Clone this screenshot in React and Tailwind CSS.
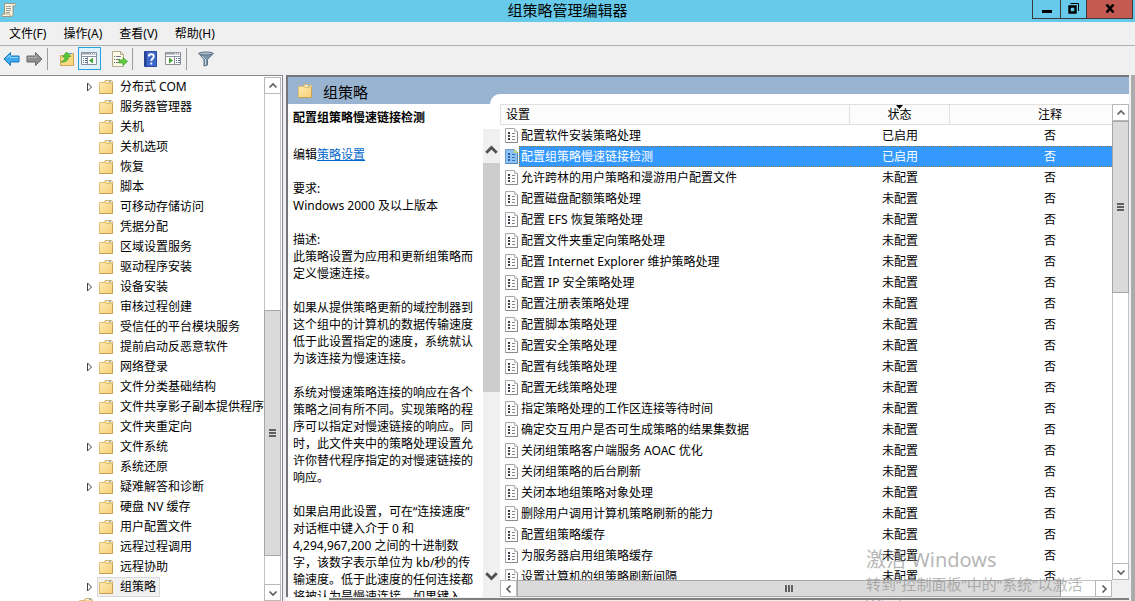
import React from "react";

const tree = [
  ["分布式 COM", true], ["服务器管理器"], ["关机"], ["关机选项"], ["恢复"], ["脚本"], ["可移动存储访问"],
  ["凭据分配"], ["区域设置服务"], ["驱动程序安装"], ["设备安装", true], ["审核过程创建"],
  ["受信任的平台模块服务"], ["提前启动反恶意软件"], ["网络登录", true], ["文件分类基础结构"],
  ["文件共享影子副本提供程序"], ["文件夹重定向"], ["文件系统", true], ["系统还原"],
  ["疑难解答和诊断", true], ["硬盘 NV 缓存"], ["用户配置文件"], ["远程过程调用"], ["远程协助"],
  ["组策略", true, true],
];

const policies = [
  "配置软件安装策略处理", "配置组策略慢速链接检测", "允许跨林的用户策略和漫游用户配置文件",
  "配置磁盘配额策略处理", "配置 EFS 恢复策略处理", "配置文件夹重定向策略处理",
  "配置 Internet Explorer 维护策略处理", "配置 IP 安全策略处理", "配置注册表策略处理",
  "配置脚本策略处理", "配置安全策略处理", "配置有线策略处理", "配置无线策略处理",
  "指定策略处理的工作区连接等待时间", "确定交互用户是否可生成策略的结果集数据",
  "关闭组策略客户端服务 AOAC 优化", "关闭组策略的后台刷新", "关闭本地组策略对象处理",
  "删除用户调用计算机策略刷新的能力", "配置组策略缓存", "为服务器启用组策略缓存",
  "设置计算机的组策略刷新间隔",
];

const description = [
  "描述:", "此策略设置为应用和更新组策略而", "定义慢速连接。", "",
  "如果从提供策略更新的域控制器到", "这个组中的计算机的数据传输速度", "低于此设置指定的速度，系统就认", "为该连接为慢速连接。", "",
  "系统对慢速策略连接的响应在各个", "策略之间有所不同。实现策略的程", "序可以指定对慢速链接的响应。同", "时，此文件夹中的策略处理设置允", "许你替代程序指定的对慢速链接的", "响应。", "",
  "如果启用此设置，可在“连接速度”", "对话框中键入介于 0 和", "4,294,967,200 之间的十进制数", "字，该数字表示单位为 kb/秒的传", "输速度。低于此速度的任何连接都", "将被认为是慢速连接。如果键入",
];

function Folder() {
  return (
    <svg width="16" height="16" viewBox="0 0 16 16" className="shrink-0" aria-hidden="true">
      <defs>
        <linearGradient id="folder" x1="0" y1="0" x2="1" y2="1">
          <stop offset="0" stopColor="#ffebb0" />
          <stop offset="1" stopColor="#f5cf78" />
        </linearGradient>
      </defs>
      <path d="M6.500 5V2.500l1-1h6l1 1V6z" fill="#f3da98" stroke="#d2b068" />
      <path d="M8.500 2.500h5" stroke="#fdfdf5" />
      <path d="M11 2.500h2" stroke="#5aa5e0" />
      <path d="M1.500 3.500h5.500l1.500 1h6v10h-13z" fill="url(#folder)" stroke="#e2be70" />
      <path d="M1.500 14.500h13V5" fill="none" stroke="#c9a152" />
    </svg>
  );
}

function PolicyIcon({ selected }) {
  return (
    <svg width="14" height="16" viewBox="0 0 14 16" className="shrink-0" aria-hidden="true">
      <path d="M.5.5h9l3 3v11H.5z" fill={selected ? "#8cc2fa" : "#fdfdfd"} stroke={selected ? "#6a9ccc" : "#a8a8a8"} />
      <path d="M.5 14.500h12V4" fill="none" stroke={selected ? "#5485b8" : "#8a8a8a"} />
      <path d="M9.500.5v3h3" fill={selected ? "#c9e4a0" : "#ececec"} stroke={selected ? "#b9d65a" : "#b8b8b8"} />
      <path d="M3 4h2v2H3zM3 7h2v2H3zM3 10h2v2H3z" fill={selected ? "#2b5c9e" : "#3c3c46"} />
      <path d="M7 5.500h3M7 8.500h3M7 11.500h3" stroke={selected ? "#3e70ad" : "#85858f"} />
    </svg>
  );
}

function Chevron({ dir, bold }) {
  const paths = { up: "M1.500 6.500L5 3l3.500 3.500", down: "M1.500 3.500L5 7l3.500-3.500", left: "M6.500 1.500L3 5l3.500 3.500", right: "M3.500 1.500L7 5 3.500 8.500" };
  return (
    <svg width={bold ? 15 : 10} height={bold ? 15 : 10} viewBox="0 0 10 10" aria-hidden="true">
      <path d={paths[dir]} fill="none" stroke={bold ? "#505050" : "#606060"} strokeWidth={bold ? 1.900 : 1.700} />
    </svg>
  );
}

function Grip({ vertical }) {
  return (
    <svg width="9" height="9" viewBox="0 0 9 9" aria-hidden="true">
      <path d={vertical ? "M1 1v7M4 1v7M7 1v7" : "M1 1h7M1 4h7M1 7h7"} stroke="#606060" strokeWidth="2" />
    </svg>
  );
}

const arrowButton = "flex h-[17px] w-[17px] shrink-0 items-center justify-center border border-[#b8b8b8] bg-white";

function Arrow({ dir, label }) {
  return <button type="button" aria-label={label} className={arrowButton}><Chevron dir={dir} /></button>;
}

function ToolButton({ label, active, children }) {
  return (
    <button type="button" aria-label={label} className={`flex h-[23px] w-[23px] shrink-0 items-center justify-center border ${active ? "border-[#26a0da] bg-[#dff1fb]" : "border-transparent"}`}>
      {children}
    </button>
  );
}

function Separator({ className }) {
  return <div className={`h-[22px] w-px shrink-0 bg-[#9c9c9c] ${className}`} />;
}

function ArrowIcon({ forward }) {
  return (
    <svg width="17" height="16" viewBox="0 0 17 16" aria-hidden="true">
      <path
        d={forward ? "M16 8L9.500 1.500v3.500H1v6h8.500v3.500z" : "M1 8l6.500-6.500v3.500H16v6H7.500v3.500z"}
        fill={forward ? "#8e8e8e" : "#3daaf0"} stroke={forward ? "#6a6a6a" : "#1c78bd"}
      />
      <path d={forward ? "M2 6.500h8V4" : "M4 7l3-3v2.500h8"} fill="none" stroke={forward ? "#b4b4b4" : "#8ad4ff"} />
    </svg>
  );
}

function PanelIcon({ flipped }) {
  return (
    <svg width="17" height="15" viewBox="0 0 17 15" aria-hidden="true">
      <path d="M.5 1.500h15v12H.5z" fill="#fff" stroke="#8a8f96" />
      <path d="M1 2.500h14" stroke="#98a1ac" strokeWidth="2" />
      <path d="M10 2.500h1M12 2.500h1M14 2.500h1" stroke="#fff" />
      <path d="M1 5.500h14" stroke="#8b949e" />
      {flipped ? (
        <>
          <path d="M9.500 6v7" stroke="#8a8f96" />
          <path d="M11 7.500h1M11 9.500h1M11 11.500h1M13 7.500h2M13 9.500h2M13 11.500h2" stroke="#4e6f9b" />
          <path d="M4 6.500l4 3-4 3z" fill="#3fa535" />
        </>
      ) : (
        <>
          <path d="M6.500 6v7" stroke="#8a8f96" />
          <path d="M2 7.500h1M2 9.500h1M2 11.500h1M4 7.500h2M4 9.500h2M4 11.500h2" stroke="#4e6f9b" />
          <path d="M12 6.500l-4 3 4 3z" fill="#3fa535" />
        </>
      )}
    </svg>
  );
}

export default function App() {
  return (
    <div className="relative flex h-screen flex-col overflow-hidden bg-[#f0f0f0] font-['Noto_Sans','Noto_Sans_CJK_SC',sans-serif] text-xs text-black">
      <header className="flex h-[22px] shrink-0 items-start bg-[#67caea]">
        <div className="w-[103px] pt-[2px] pl-[1px]">
          <svg width="16" height="16" viewBox="0 0 16 16" aria-hidden="true">
            <path d="M3.500 1.500h10c1.500 0 1.500 2.500 0 2.500H12v8c0 2-1 2.500-2 2.500H2c-1.500 0-1.500-2.500 0-2.500h1.500z" fill="#fbf6e3" stroke="#a0977c" />
            <path d="M12 4V2.500M2 12h7v2" fill="none" stroke="#b8ad8a" />
            <path d="M5 4.500h5M5 6.500h5M5 8.500h5M5 10.500h4" stroke="#9a9a96" />
          </svg>
        </div>
        <h1 className="flex-1 text-center text-[15px] leading-[20px]">组策略管理编辑器</h1>
        <div className="mr-[2px] flex h-[19px] w-[101px] divide-x divide-[#3a3a3a] border border-t-0 border-[#3a3a3a]">
          <button type="button" aria-label="最小化" className="flex w-[28px] items-center justify-center">
            <svg width="10" height="10" viewBox="0 0 10 10"><path d="M0 6h10v3H0z" /></svg>
          </button>
          <button type="button" aria-label="还原" className="flex w-[26px] items-center justify-center pb-[2px]">
            <svg width="11" height="11" viewBox="0 0 11 11" fill="none" stroke="#000">
              <path d="M1.500 3.500h6v6h-6z" strokeWidth="2.400" /><path d="M2.500.5h8V8" />
            </svg>
          </button>
          <button type="button" aria-label="关闭" className="flex flex-1 items-center justify-center bg-[#c35b52] pb-[2px]">
            <svg width="10" height="9" viewBox="0 0 10 9"><path d="M1.500 0.500l7 8M8.500 0.500l-7 8" stroke="#000" strokeWidth="2.600" /></svg>
          </button>
        </div>
      </header>

      <nav className="flex h-6 shrink-0 items-center gap-[17px] border-b border-[#b0b0b8] pl-[9px]">
        <button type="button">文件(F)</button>
        <button type="button">操作(A)</button>
        <button type="button">查看(V)</button>
        <button type="button">帮助(H)</button>
      </nav>

      <div className="flex h-[29px] shrink-0 items-center pb-[4px]">
        <ToolButton label="后退"><ArrowIcon /></ToolButton>
        <ToolButton label="前进"><ArrowIcon forward /></ToolButton>
        <Separator className="ml-[1px] mr-[7px]" />
        <ToolButton label="上一级">
          <svg width="16" height="16" viewBox="0 0 16 16" aria-hidden="true">
            <path d="M1.500 4.500h6l1-2h6v12h-13z" fill="#f8d982" stroke="#cfa655" />
            <path d="M10 2.500h3" stroke="#4a9be0" />
            <path d="M2 11c3-1 4-3 4-5H3.500l4-5 4.500 4.500H9.500C9.500 9 7 11.500 2 11z" fill="#57c83b" stroke="#3c9a2c" strokeWidth=".7" />
          </svg>
        </ToolButton>
        <ToolButton label="显示/隐藏控制台树" active><PanelIcon /></ToolButton>
        <div className="w-[7px]" />
        <ToolButton label="导出列表">
          <svg width="17" height="16" viewBox="0 0 17 16" aria-hidden="true">
            <path d="M1.500.5h8l3 3v12h-11z" fill="#fffbe9" stroke="#b5ab8e" />
            <path d="M9.500.5v3h3" fill="none" stroke="#b5ab8e" />
            <path d="M3 5.500h1M3 8.500h1M3 11.500h1M5 5.500h5M5 8.500h4M5 11.500h4" stroke="#6d7480" />
            <path d="M8 9h4V6.500l4.500 4-4.500 4V12H8z" fill="#65cc43" stroke="#3c9829" strokeWidth=".7" />
          </svg>
        </ToolButton>
        <Separator className="ml-[1px] mr-[6px]" />
        <ToolButton label="帮助">
          <svg width="13" height="16" viewBox="0 0 13 16" aria-hidden="true">
            <path d="M.5.5h12v15H.5z" fill="#3f68cf" stroke="#2a489c" />
            <path d="M1.500 1v14" stroke="#243f8d" strokeWidth="2" />
            <path d="M4.800 5.500c0-3 5-3 5 0 0 2-2.500 2-2.500 4.500M7.300 11.500v2" fill="none" stroke="#fff" strokeWidth="1.800" />
          </svg>
        </ToolButton>
        <ToolButton label="显示/隐藏操作窗格"><PanelIcon flipped /></ToolButton>
        <Separator className="ml-[1px] mr-[7px]" />
        <ToolButton label="筛选">
          <svg width="16" height="16" viewBox="0 0 16 16" aria-hidden="true">
            <path d="M.8 2.500L6 8.500v6.500l3.500-1V8.500l5.700-6z" fill="#7d95ab" stroke="#5d7288" />
            <ellipse cx="8" cy="2.500" rx="7.300" ry="1.500" fill="#a9bccc" stroke="#5d7288" />
            <path d="M7.500 8v6M4 5l3 3" stroke="#c3d3df" />
          </svg>
        </ToolButton>
      </div>

      <main className="flex min-h-0 flex-1">
        <aside className="flex w-[283px] shrink-0 border-t border-r border-[#828790] bg-white pt-[1px] pr-[1px]">
          <ul className="min-w-0 flex-1 overflow-hidden">
            {tree.map(([name, expandable, selected]) => (
              <li key={name} className="flex h-5 items-center pl-[85px]">
                <span className="w-3 shrink-0">
                  {expandable && (
                    <svg width="8" height="10" viewBox="0 0 8 10" aria-hidden="true">
                      <path d="M2.500 1v8l4-4z" fill="#fff" stroke="#404040" />
                    </svg>
                  )}
                </span>
                <button type="button" className={`flex h-5 items-center gap-[6px] whitespace-nowrap border pr-[3px] ${selected ? "border-[#dadada] bg-[#f1f1f1]" : "border-transparent"}`}>
                  <Folder />{name}
                </button>
              </li>
            ))}
            <li className="pl-[78px]"><Folder /></li>
          </ul>
          <div className="flex w-[17px] shrink-0 flex-col bg-white">
            <Arrow dir="up" label="向上滚动" />
            <div className="flex-[217] border-x border-[#c4c4c4]" />
            <div className="flex flex-[245] items-center justify-center border border-[#a6a6a6] bg-[#dadada]"><Grip /></div>
            <div className="flex-[28] border-x border-[#c4c4c4]" />
            <Arrow dir="down" label="向下滚动" />
          </div>
        </aside>

        <div className="ml-[3px] flex min-w-0 flex-1 flex-col">
          <section className="flex min-h-0 flex-1 flex-col border-t-2 border-l-2 border-[#74767c] bg-white">
            <div className="flex h-[27px] shrink-0 items-end bg-[#99b4d1]">
              <div className="flex h-[27px] w-[202px] items-center gap-[10px] pl-[9px]">
                <Folder />
                <h2 className="pt-[2px] text-[15px] leading-[22px]">组策略</h2>
              </div>
              <div className="h-[10px] flex-1 rounded-tl-[10px] bg-white" />
            </div>
            <div className="flex min-h-0 flex-1">
              <article className="w-[195px] shrink-0 overflow-hidden whitespace-nowrap pt-[5px] pl-[5px] leading-[17px]">
                <h3 className="mb-5 font-bold">配置组策略慢速链接检测</h3>
                <p className="mb-[17px]">编辑<a href="#edit" className="text-[#0066cc] underline">策略设置</a></p>
                <p>要求:</p>
                <p className="mb-[17px]">Windows 2000 及以上版本</p>
                {description.map((line, i) => <p key={i} className="h-[17px]">{line}</p>)}
              </article>
              <div className="mt-[25px] flex w-[17px] shrink-0 flex-col bg-[#f0f0f0]">
                <button type="button" aria-label="说明向上滚动" className="flex h-[34px] items-center justify-center pt-2"><Chevron dir="up" bold /></button>
                <div className="flex-[229] bg-[#cdcdcd]" />
                <div className="flex-[166]" />
                <button type="button" aria-label="说明向下滚动" className="flex h-[39px] items-center justify-center pb-1"><Chevron dir="down" bold /></button>
              </div>
              <div className="flex min-w-0 flex-1 flex-col">
                <div className="flex min-h-0 flex-1">
                  <div className="min-w-0 flex-1 overflow-hidden">
                    <table className="w-full min-w-[650px] table-fixed border-separate border-spacing-0">
                      <colgroup><col /><col className="w-[100px]" /><col className="w-[200px]" /></colgroup>
                      <thead>
                        <tr className="h-[21px] bg-[#fcfcfc]">
                          <th className="border border-[#e0e0e0] p-0 pl-[5px] text-left font-normal leading-[19px]">设置</th>
                          <th className="border-y border-r border-[#e0e0e0] p-0 font-normal leading-[19px]">
                            <span className="relative">状态
                              <svg className="absolute top-[-1px] left-[9px]" width="7" height="5" viewBox="0 0 7 5"><path d="M0 0h7L3.500 4z" /></svg>
                            </span>
                          </th>
                          <th className="border-y border-[#e0e0e0] p-0 font-normal leading-[19px]">注释</th>
                        </tr>
                      </thead>
                      <tbody>
                        {policies.map((name, i) => {
                          const selected = i === 1;
                          const cell = selected ? "border-y border-dotted border-[#cc6600]/70 bg-[#3399ff] text-white" : "border-y border-transparent";
                          return (
                            <tr key={name} className="h-[21px] leading-[19px]">
                              <td className="p-0">
                                <div className="flex h-[21px] items-center pl-[5px]">
                                  <PolicyIcon selected={selected} />
                                  <span className={`flex-1 whitespace-nowrap border-y border-l pl-[1px] leading-[19px] ${selected ? "border-dotted border-[#cc6600]/70 bg-[#3399ff] text-white" : "border-transparent"}`}>{name}</span>
                                </div>
                              </td>
                              <td className={`p-0 text-center ${cell}`}>{i < 2 ? "已启用" : "未配置"}</td>
                              <td className={`p-0 text-center ${cell}`}>否</td>
                            </tr>
                          );
                        })}
                      </tbody>
                    </table>
                  </div>
                  <div className="flex w-[17px] shrink-0 flex-col bg-white">
                    <Arrow dir="up" label="列表向上滚动" />
                    <div className="flex flex-[171] items-center justify-center border border-[#a6a6a6] bg-[#dadada]"><Grip /></div>
                    <div className="flex-[271] border-x border-[#c4c4c4]" />
                    <Arrow dir="down" label="列表向下滚动" />
                  </div>
                </div>
                <div className="flex h-[17px] shrink-0 bg-[#f0f0f0]">
                  <Arrow dir="left" label="向左滚动" />
                  <div className="flex flex-[544] items-center justify-center border border-[#a6a6a6] bg-[#dadada]"><Grip vertical /></div>
                  <div className="flex-[34] border-y border-[#c4c4c4] bg-white" />
                  <Arrow dir="right" label="向右滚动" />
                  <div className="w-[17px]" />
                </div>
              </div>
            </div>
          </section>
          <div className="flex h-1 shrink-0 pt-[1px]">
            <div className="w-[43px] bg-white" />
            <div className="flex-1 border-t-2 border-[#808080]" />
          </div>
        </div>
        <div className="w-[2px] shrink-0 bg-[#f0f0f0]" />
        <div className="w-1 shrink-0 bg-[#ababab]" />
      </main>

      <div className="pointer-events-none absolute right-[29px] bottom-[-13px] w-[240px] text-[#8c8c8c]/65">
        <p className="text-xl leading-[28px]">激活 Windows</p>
        <p className="text-[15px] leading-[20px]">转到“控制面板”中的“系统”以激活 Windows。</p>
      </div>
    </div>
  );
}
